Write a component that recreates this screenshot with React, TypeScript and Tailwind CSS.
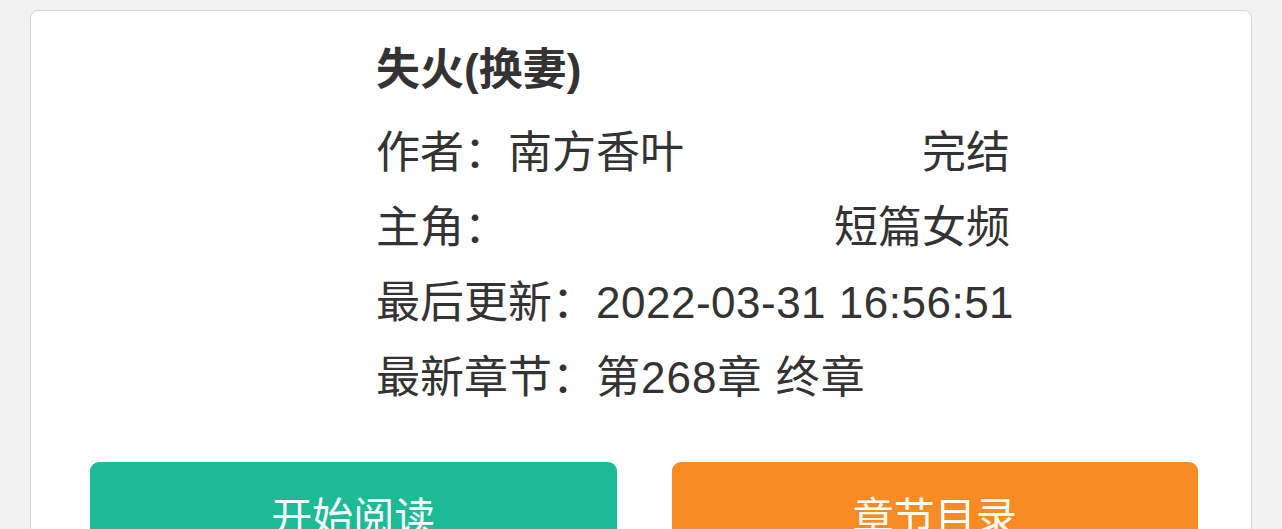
import React from "react";

const font = { fontFamily: '"Liberation Sans", "Noto Sans CJK SC", sans-serif' };

export default function App() {
  return (
    <div className="min-h-[529px] h-[529px] overflow-hidden bg-[#f2f2f2] px-[30px] pt-[10px]" style={font}>
      <div className="h-[600px] rounded-[8px] border border-[#d4d4d4] bg-white">
        <div className="pl-[345px] pt-[29px]">
          <div className="w-[634px] text-[#333333]">
            <div className="h-[60px] text-[44px] font-bold leading-[60px]">失火(换妻)</div>
            <div className="mt-[15px] flex h-[75px] items-center justify-between text-[44px] leading-[75px]">
              <span>作者：南方香叶</span>
              <span>完结</span>
            </div>
            <div className="flex h-[75px] items-center justify-between text-[44px] leading-[75px]">
              <span>主角：</span>
              <span>短篇女频</span>
            </div>
            <div className="flex h-[75px] items-center whitespace-nowrap text-[44px] leading-[75px]">
              <span>最后更新：</span>
              <span className="tracking-[0.5px]">2022-03-31 16:56:51</span>
            </div>
            <div className="flex h-[75px] items-center whitespace-nowrap text-[44px] leading-[75px]">
              <span>最新章节：</span>
              <span className="tracking-[1px]">第268章 终章</span>
            </div>
          </div>
        </div>
        <div className="mt-[47px] grid grid-cols-2 gap-[55px] pl-[59px] pr-[53px]">
          <div className="flex h-[114px] items-center justify-center rounded-[9px] bg-[#1cbb96] text-[41px] text-white">
            开始阅读
          </div>
          <div className="flex h-[114px] items-center justify-center rounded-[9px] bg-[#f98b24] text-[41px] text-white">
            章节目录
          </div>
        </div>
      </div>
    </div>
  );
}
